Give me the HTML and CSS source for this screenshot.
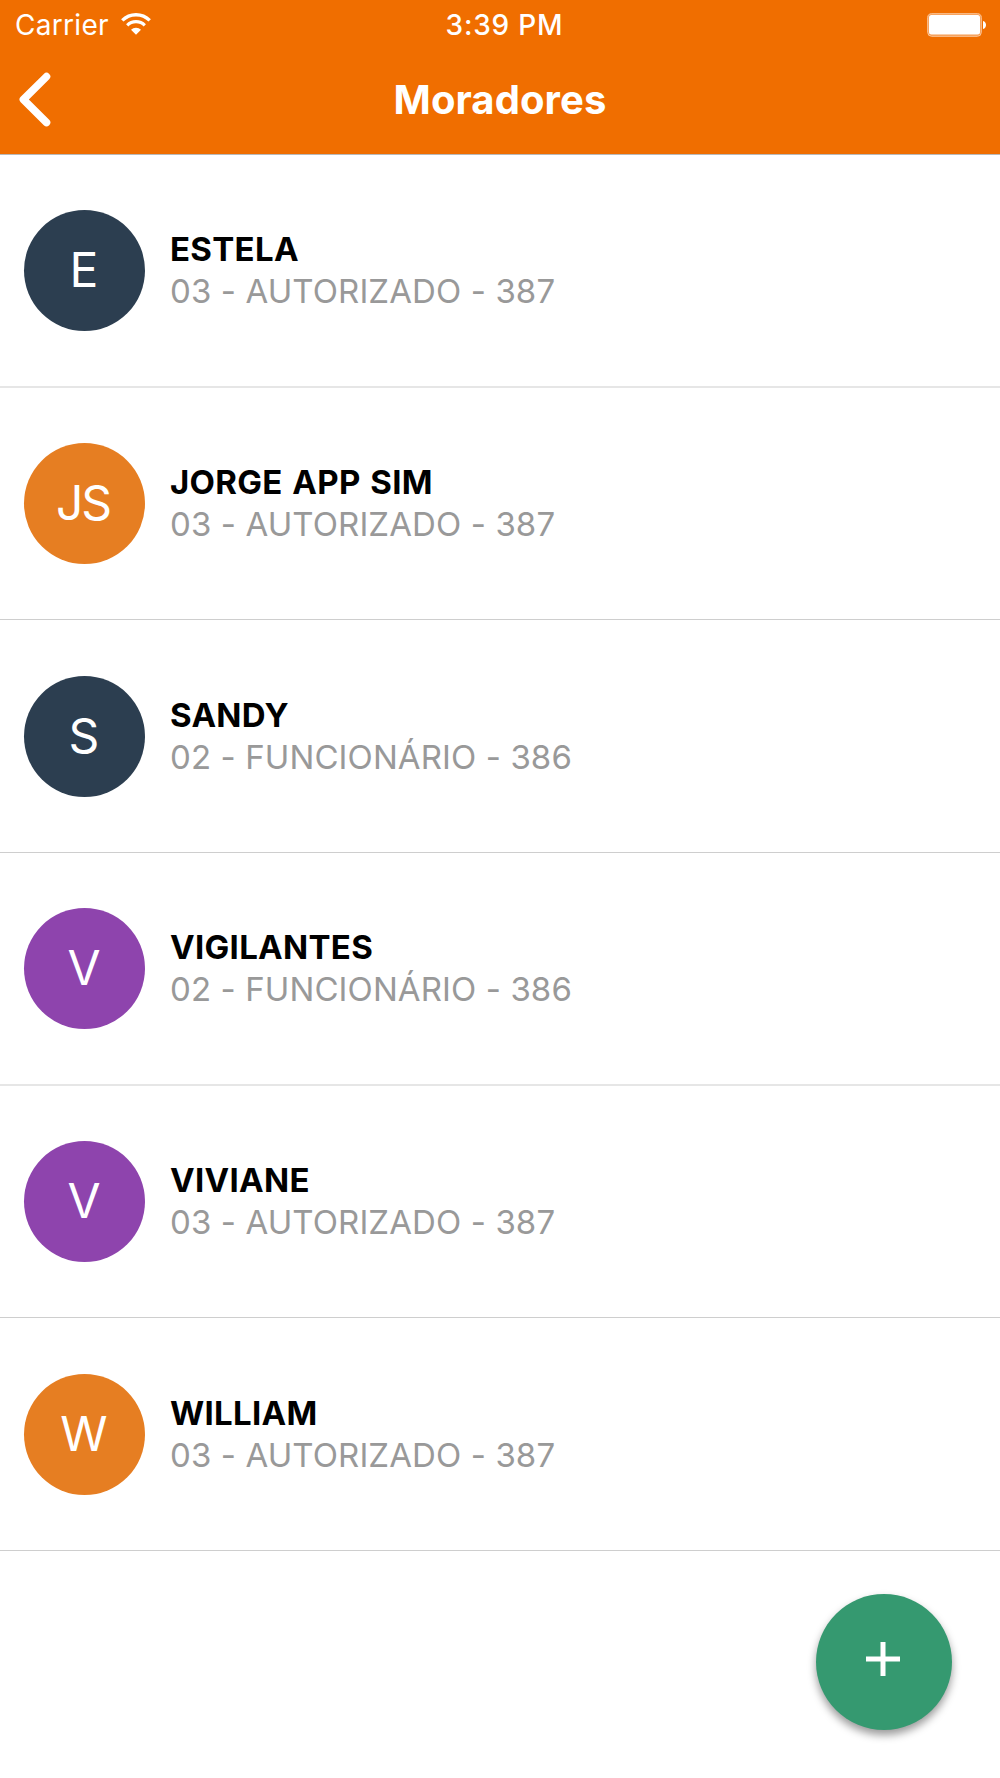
FILE: index.html
```html
<!DOCTYPE html>
<html lang="pt-BR">
<head>
  <meta charset="UTF-8">
  <meta name="viewport" content="width=device-width, initial-scale=1.0">
  <title>Moradores</title>
  <link rel="stylesheet" href="styles.css">
</head>
<body>
  <header class="header">
    <div class="status-bar">
      <div class="status-left">
        <span class="carrier">Carrier</span>
        <svg class="wifi" width="30" height="22" viewBox="0 0 30 22">
          <path d="M1.3 7.4a19.4 19.4 0 0 1 27.4 0" fill="none" stroke="#fff" stroke-width="3.4"/>
          <path d="M6.2 12.3a12.4 12.4 0 0 1 17.6 0" fill="none" stroke="#fff" stroke-width="3.2"/>
          <path d="M15 21.8l-5-5a7 7 0 0 1 10 0z" fill="#fff"/>
        </svg>
      </div>
      <span class="time">3:39 PM</span>
      <div class="status-right">
        <svg width="60" height="24" viewBox="0 0 60 24">
          <rect x="0.7" y="0.7" width="53.6" height="22.6" rx="4" fill="#f59a50" stroke="#fbc79d" stroke-width="1"/>
          <rect x="2" y="2" width="51" height="19.5" rx="2.5" fill="#fff"/>
          <path d="M56 8c4 1 4 7 0 8z" fill="#fff"/>
        </svg>
      </div>
    </div>
    <div class="nav-bar">
      <a href="#" class="back" aria-label="Voltar">
        <svg width="32" height="56" viewBox="0 0 32 56">
          <path d="M27.5 4.6L4.4 27.5l23.1 23" fill="none" stroke="#fff" stroke-width="7.6" stroke-linecap="round" stroke-linejoin="round"/>
        </svg>
      </a>
      <h1 class="title">Moradores</h1>
    </div>
  </header>

  <ul class="list">
    <li class="item">
      <div class="avatar navy">E</div>
      <div class="info">
        <h2 class="name">ESTELA</h2>
        <p class="detail">03 - AUTORIZADO - 387</p>
      </div>
    </li>
    <li class="item">
      <div class="avatar orange">JS</div>
      <div class="info">
        <h2 class="name">JORGE APP SIM</h2>
        <p class="detail">03 - AUTORIZADO - 387</p>
      </div>
    </li>
    <li class="item">
      <div class="avatar navy">S</div>
      <div class="info">
        <h2 class="name">SANDY</h2>
        <p class="detail">02 - FUNCIONÁRIO - 386</p>
      </div>
    </li>
    <li class="item">
      <div class="avatar purple">V</div>
      <div class="info">
        <h2 class="name">VIGILANTES</h2>
        <p class="detail">02 - FUNCIONÁRIO - 386</p>
      </div>
    </li>
    <li class="item">
      <div class="avatar purple">V</div>
      <div class="info">
        <h2 class="name">VIVIANE</h2>
        <p class="detail">03 - AUTORIZADO - 387</p>
      </div>
    </li>
    <li class="item">
      <div class="avatar orange">W</div>
      <div class="info">
        <h2 class="name">WILLIAM</h2>
        <p class="detail">03 - AUTORIZADO - 387</p>
      </div>
    </li>
  </ul>

  <button class="add-btn" aria-label="Adicionar">
    <svg width="34" height="34" viewBox="0 0 34 34">
      <path d="M17 0v34M0 17h34" stroke="#fff" stroke-width="5"/>
    </svg>
  </button>
</body>
</html>
```
FILE: styles.css
```css
* {
  margin: 0;
  padding: 0;
  box-sizing: border-box;
  font-family: Inter, Roboto, sans-serif;
}

body {
  background-color: #fff;
  color: #000;
  min-height: 100vh;
}

.header {
  height: 155px;
  background-color: #f06e00;
  border-bottom: 1px solid #b9b9b9;
  color: #fff;
}

.status-bar {
  height: 50px;
  padding: 0 13px 0 15px;
  display: grid;
  grid-template-columns: 1fr auto 1fr;
  align-items: center;
}

.status-left {
  display: flex;
  align-items: center;
  gap: 12px;
}

.carrier {
  font-size: 28px;
  letter-spacing: 0.3px;
}

.wifi {
  margin-bottom: 2px;
}

.time {
  font-size: 28px;
  font-weight: 500;
  letter-spacing: 0.8px;
  padding-left: 7px;
}

.status-right {
  display: flex;
  justify-content: flex-end;
}

.nav-bar {
  height: 99px;
  padding: 0 19px;
  display: grid;
  grid-template-columns: 1fr auto 1fr;
  align-items: center;
}

.back {
  display: flex;
}

.title {
  font-size: 40px;
  font-weight: 700;
  letter-spacing: 0.1px;
}

.list {
  list-style: none;
}

.item {
  height: 232.7px;
  padding: 0 24px;
  display: flex;
  align-items: center;
  gap: 25px;
  border-bottom: 1px solid #cecece;
}

.item:nth-child(3n + 1) {
  border-bottom: 2px solid #e6e6e6;
}

.avatar {
  width: 121px;
  height: 121px;
  padding: 0 3px 1.5px 0;
  border-radius: 50%;
  display: flex;
  justify-content: center;
  align-items: center;
  color: #fff;
  font-size: 48px;
  font-weight: 400;
  letter-spacing: -2px;
}

.navy {
  background-color: #2c3e50;
}

.orange {
  background-color: #e67e22;
}

.purple {
  background-color: #8e44ad;
}

.info {
  padding-bottom: 1.4px;
}

.name {
  font-size: 33px;
  font-weight: 700;
  line-height: 42px;
  letter-spacing: 0.3px;
  word-spacing: 1.5px;
}

.detail {
  color: #999;
  font-size: 33px;
  line-height: 42px;
  letter-spacing: 0.1px;
}

.add-btn {
  position: fixed;
  right: 48px;
  bottom: 48px;
  width: 136px;
  height: 136px;
  padding: 0 2px 6px 0;
  border: none;
  border-radius: 50%;
  background-color: #359970;
  box-shadow: 0 5px 9px rgba(0,0,0,0.4);
  display: flex;
  justify-content: center;
  align-items: center;
  cursor: pointer;
}
```
